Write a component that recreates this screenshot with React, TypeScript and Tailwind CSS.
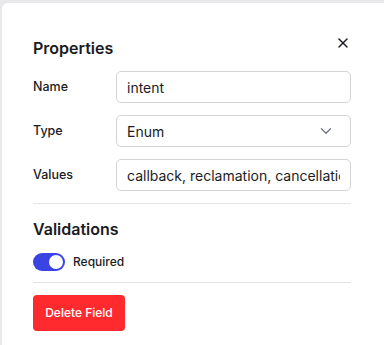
import React from "react";

export default function App() {
  const font = { fontFamily: "Inter, 'Noto Sans', sans-serif" };
  return (
    <div className="w-[384px] h-[345px] bg-[#e9e9ec] pt-[3px] pl-[2px] overflow-hidden" style={font}>
      <div className="h-full bg-white rounded-tl-[6px] pl-[31px] pr-[33px] pt-[30px] text-[#1b1b23]">
        <div className="flex items-start justify-between h-[26px]">
          <h2 className="text-[16px] leading-[24px] font-semibold pt-[3px]">Properties</h2>
          <button className="mt-[1px] mr-[-1px] w-[18px] h-[18px] flex items-center justify-center text-[#1b1b23]">
            <svg width="16" height="16" viewBox="0 0 24 24" fill="none" stroke="currentColor" strokeWidth="2.2" strokeLinecap="round">
              <path d="M18 6 6 18" />
              <path d="m6 6 12 12" />
            </svg>
          </button>
        </div>
        <div className="mt-[12px] flex flex-col gap-[12px]">
          <div className="flex items-center">
            <label className="w-[83px] text-[12.5px] font-medium">Name</label>
            <div className="flex-1 h-[32px] border border-[#d4d4d8] rounded-[5px] px-[10px] flex items-center text-[14px]">intent</div>
          </div>
          <div className="flex items-center">
            <label className="w-[83px] text-[12.5px] font-medium">Type</label>
            <div className="flex-1 h-[32px] border border-[#d4d4d8] rounded-[5px] pl-[10px] pr-[15px] flex items-center justify-between text-[14px]">
              <span>Enum</span>
              <svg width="18" height="18" viewBox="0 0 24 24" fill="none" stroke="#6b7280" strokeWidth="1.6" strokeLinecap="round" strokeLinejoin="round">
                <path d="m6 9 6 6 6-6" />
              </svg>
            </div>
          </div>
          <div className="flex items-center">
            <label className="w-[83px] text-[12.5px] font-medium">Values</label>
            <div className="flex-1 min-w-0 h-[32px] border border-[#d4d4d8] rounded-[5px] px-[10px] flex items-center text-[14px]">
              <span className="block w-full overflow-hidden whitespace-nowrap">callback, reclamation, cancellation</span>
            </div>
          </div>
        </div>
        <div className="mt-[12px] border-t border-[#e4e4e7]" />
        <h2 className="mt-[13px] text-[16px] leading-[24px] font-semibold">Validations</h2>
        <div className="mt-[12px] flex items-center gap-[8px]">
          <div className="w-[32px] h-[18px] rounded-full bg-[#3944e2] flex items-center justify-end pr-[2px]">
            <div className="w-[14px] h-[14px] rounded-full bg-white" />
          </div>
          <span className="text-[12px] font-medium">Required</span>
        </div>
        <div className="mt-[11px] border-t border-[#e4e4e7]" />
        <button className="mt-[12px] w-[92px] h-[36px] rounded-[4px] bg-[#ff2a2d] text-white text-[12px] font-medium">Delete Field</button>
      </div>
    </div>
  );
}
